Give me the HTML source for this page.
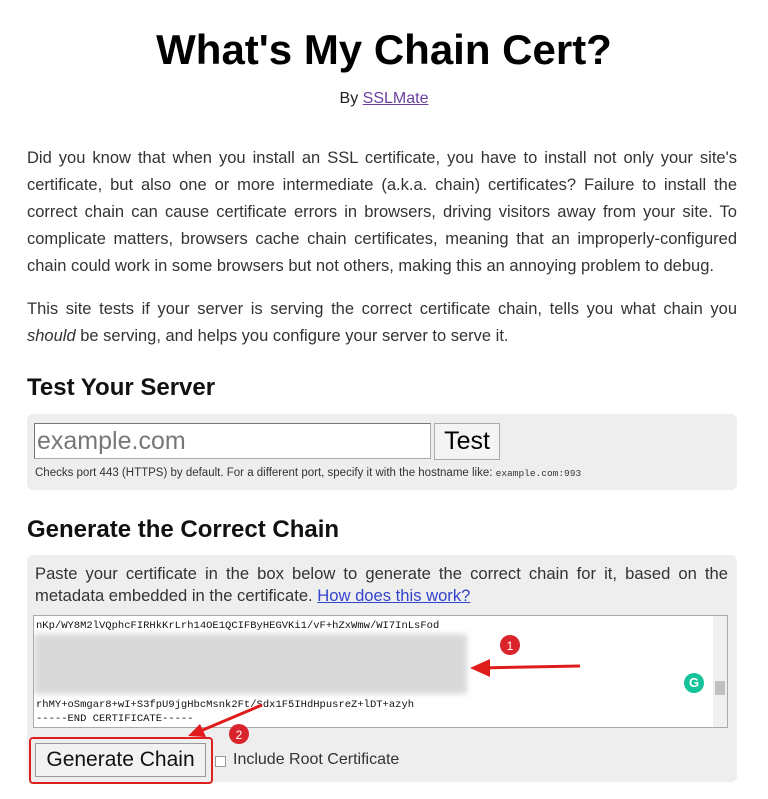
<!DOCTYPE html>
<html><head><meta charset="utf-8"><style>
body{margin:0;background:#fff;font-family:"Liberation Sans",sans-serif;color:#222;width:768px;height:799px;overflow:hidden;position:relative}
.a{position:absolute}
h1{position:absolute;top:26px;left:0;width:768px;text-align:center;margin:0;font-size:42px;color:#000}
.by{top:90px;left:0;width:768px;text-align:center;font-size:16px}
a{color:#6b3fa0;text-decoration:underline}
p{position:absolute;left:27px;width:710px;margin:0;font-size:16.5px;line-height:27px;text-align:justify;color:#333}
h2{position:absolute;left:27px;margin:0;font-size:24px;color:#111}
.box{position:absolute;left:27px;width:710px;background:#eee;border-radius:6px}
.mono{font-family:"Liberation Mono",monospace;font-size:10.5px;line-height:14px;color:#111}
</style></head><body>
<h1>What's My Chain Cert?</h1>
<div class="a by">By <a>SSLMate</a></div>
<p style="top:145px">Did you know that when you install an SSL certificate, you have to install not only your site's certificate, but also one or more intermediate (a.k.a. chain) certificates? Failure to install the correct chain can cause certificate errors in browsers, driving visitors away from your site. To complicate matters, browsers cache chain certificates, meaning that an improperly-configured chain could work in some browsers but not others, making this an annoying problem to debug.</p>
<p style="top:296px">This site tests if your server is serving the correct certificate chain, tells you what chain you <i>should</i> be serving, and helps you configure your server to serve it.</p>
<h2 style="top:374px">Test Your Server</h2>
<div class="box" style="top:414px;height:76px"></div>
<div class="a" style="left:34px;top:423px;width:393px;height:34px;background:#fff;border:1px solid #aaa;border-top-color:#777;border-left-color:#777;font-size:25px;color:#777;line-height:34px;padding-left:2px">example.com</div>
<div class="a" style="left:434px;top:423px;width:64px;height:35px;background:#f4f4f4;border:1px solid #aaa;font-size:25px;line-height:35px;text-align:center;color:#000">Test</div>
<div class="a" style="left:35px;top:467px;font-size:11.5px;color:#333">Checks port 443 (HTTPS) by default. For a different port, specify it with the hostname like: <span style="font-family:'Liberation Mono',monospace;font-size:9.5px">example.com:993</span></div>
<h2 style="top:516px">Generate the Correct Chain</h2>
<div class="box" style="top:555px;height:227px"></div>
<p style="top:563px;left:35px;width:693px;font-size:16.6px;line-height:22px">Paste your certificate in the box below to generate the correct chain for it, based on the metadata embedded in the certificate. <a style="color:#3344cc">How does this work?</a></p>
<div class="a" style="left:33px;top:615px;width:693px;height:111px;background:#fff;border:1px solid #aaa;overflow:hidden">
<div class="mono a" style="left:2px;top:3px">nKp/WY8M2lVQphcFIRHkKrLrh14OE1QCIFByHEGVKi1/vF+hZxWmw/WI7InLsFod</div>
<div class="a" style="left:0;top:18px;width:433px;height:60px;background:#d9d9d9;filter:blur(3px)"></div>
<div class="mono a" style="left:2px;top:82px">rhMY+oSmgar8+wI+S3fpU9jgHbcMsnk2Ft/Sdx1F5IHdHpusreZ+lDT+azyh<br>-----END CERTIFICATE-----</div>
<div class="a" style="right:0;top:0;width:14px;height:111px;background:#f0f0f0"></div>
<div class="a" style="right:2px;top:65px;width:10px;height:14px;background:#c0c0c0"></div>
<div class="a" style="left:650px;top:57px;width:20px;height:20px;border-radius:50%;background:#15c39a;color:#fff;font-size:13px;text-align:center;line-height:20px;font-weight:bold">G</div>
</div>
<div class="a" style="left:29px;top:737px;width:180px;height:43px;border:2px solid #e02020;border-radius:4px"></div>
<div class="a" style="left:35px;top:743px;width:169px;height:32px;background:#f2f2f2;border:1px solid #999;font-size:21px;line-height:31px;text-align:center;color:#111">Generate Chain</div>
<div class="a" style="left:215px;top:756px;width:9px;height:9px;border:1px solid #999;background:#fff"></div>
<div class="a" style="left:233px;top:751px;font-size:16px;color:#333">Include Root Certificate</div>
<svg class="a" style="left:0;top:0" width="768" height="799">
<line x1="580" y1="666" x2="478" y2="668" stroke="#e01b1b" stroke-width="3"/>
<polygon points="470,668 490,659 490,677" fill="#e01b1b"/>
<circle cx="510" cy="645" r="10" fill="#d8242a"/>
<text x="510" y="650" font-size="12" fill="#fff" text-anchor="middle" font-family="Liberation Sans">1</text>
<line x1="262" y1="705" x2="198" y2="732" stroke="#e01b1b" stroke-width="3"/>
<polygon points="188,736 200,724 206,737" fill="#e01b1b"/>
<circle cx="239" cy="734" r="10" fill="#d8242a"/>
<text x="239" y="739" font-size="12" fill="#fff" text-anchor="middle" font-family="Liberation Sans">2</text>
</svg>
</body></html>
